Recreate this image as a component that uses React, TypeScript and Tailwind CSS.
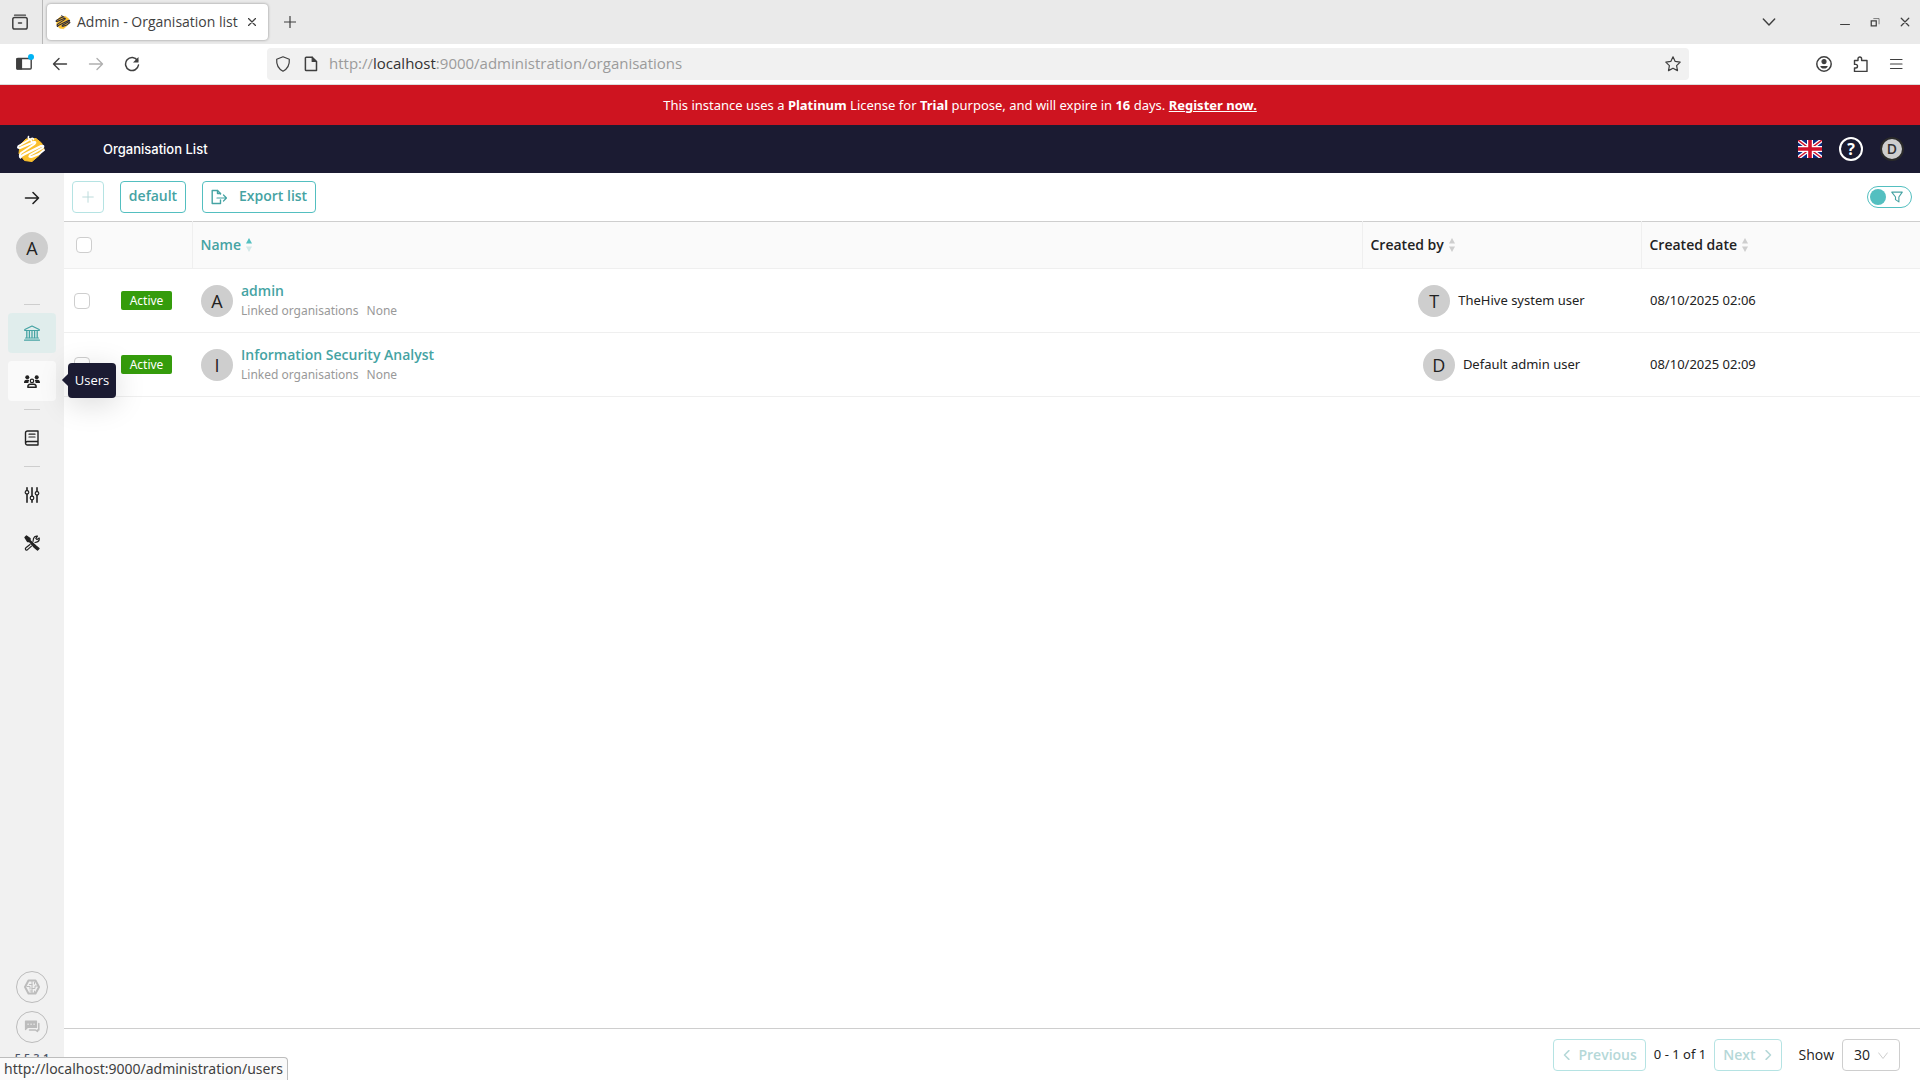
import type { ReactNode } from 'react'
import { clsx } from 'clsx'

type Organisation = {
  name: string
  initial: string
  createdBy: string
  createdByInitial: string
  createdAt: string
}

const organisations: Organisation[] = [
  { name: 'admin', initial: 'A', createdBy: 'TheHive system user', createdByInitial: 'T', createdAt: '08/10/2025 02:06' },
  { name: 'Information Security Analyst', initial: 'I', createdBy: 'Default admin user', createdByInitial: 'D', createdAt: '08/10/2025 02:09' },
]

function Icon({ size = 16, className, children }: { size?: number; className?: string; children: ReactNode }) {
  return (
    <svg
      width={size}
      height={size}
      viewBox="0 0 16 16"
      fill="none"
      stroke="currentColor"
      strokeWidth="1.2"
      strokeLinecap="round"
      strokeLinejoin="round"
      aria-hidden="true"
      className={clsx('shrink-0', className)}
    >
      {children}
    </svg>
  )
}

function HiveLogo({ size, stripe }: { size: number; stripe: string }) {
  return (
    <svg width={size} height={size} viewBox="0 0 30 28" fill="none" aria-hidden="true" className="shrink-0">
      <path d="M10 4 20 3.500 25.500 8 28 14 23 20.500 16 26.500 8.500 25.500 3 18.500 4 10Z" fill="#fbc02d" stroke="#fbc02d" strokeWidth="1" strokeLinejoin="round" />
      <g stroke={stripe} strokeWidth="2" strokeLinecap="round" strokeLinejoin="round">
        <path d="M13 5 2.500 11Q1 13.500 4 13L18 7Q20.500 6.500 18.500 9L5 18Q3 20.500 4.500 22.500" />
        <path d="M4.500 22.500Q5 21 8 19.500L25 11Q29 10 26.500 13L14 20Q12 22.500 15.500 22L23 19 28 15" />
        <path d="M14.500 4.500Q11.500 3.500 12.500 1.500M14.500 4.500 16 7M14.500 4.500Q17 2 17.500 4.500" strokeWidth="1.600" />
      </g>
    </svg>
  )
}

function UnionJack() {
  return (
    <svg width="24" height="18" viewBox="0 0 24 18" aria-hidden="true">
      <path d="M0 0h24v18H0z" fill="#0b2a80" />
      <path d="m0 0 24 18M24 0 0 18" stroke="#fff" strokeWidth="4" />
      <path d="m0 0 24 18M24 0 0 18" stroke="#d0112b" strokeWidth="1.400" />
      <path d="M12 0v18M0 9h24" stroke="#fff" strokeWidth="6" />
      <path d="M12 0v18M0 9h24" stroke="#d0112b" strokeWidth="3.600" />
    </svg>
  )
}

function Avatar({ letter }: { letter: string }) {
  return (
    <span className="flex size-8 shrink-0 items-center justify-center rounded-full bg-[#cecece] font-['Open_Sans'] text-lg leading-none text-[#222]">
      {letter}
    </span>
  )
}

function BrowserTabs() {
  return (
    <div className="flex h-11 items-center bg-[#eaeaea] pr-2 text-[#3f3f3f]">
      <div className="flex h-full w-[43px] items-center border-r border-[#b8b8b8] pl-3">
        <button type="button" aria-label="Recent browsing">
          <Icon>
            <path d="M2.500 1.200h11" />
            <rect x=".8" y="3.500" width="14.400" height="11.500" rx="1.800" strokeWidth="1.500" />
            <path d="M6.500 9h3" strokeWidth="1.500" />
          </Icon>
        </button>
      </div>
      <div className="ml-1 flex h-9 items-center rounded-sm bg-white pr-3 pl-2 shadow-[0_0_3px_rgba(0,0,0,0.4)]">
        <HiveLogo size={16} stripe="#2c2a3c" />
        <span className="ml-1.5 text-sm whitespace-nowrap">Admin - Organisation list</span>
        <button type="button" aria-label="Close tab" className="ml-2.5">
          <Icon size={8}><path d="m1 1 14 14M15 1 1 15" strokeWidth="2.600" /></Icon>
        </button>
      </div>
      <button type="button" aria-label="New tab" className="ml-4">
        <Icon size={12}><path d="M8 .5v15M.5 8h15" strokeWidth="1.600" /></Icon>
      </button>
      <div className="ml-auto flex items-center">
        <button type="button" aria-label="List all tabs" className="mr-16">
          <Icon size={14}><path d="m1.500 4.500 6.500 7 6.500-7" strokeWidth="1.600" /></Icon>
        </button>
        <button type="button" aria-label="Minimise" className="mr-5">
          <Icon size={10}><path d="M1 12h14" strokeWidth="1.600" strokeLinecap="square" /></Icon>
        </button>
        <button type="button" aria-label="Restore" className="mr-5">
          <Icon size={10}>
            <path d="M2 6h8v8H2z" strokeWidth="2" strokeLinejoin="miter" />
            <path d="M6 2.500h8.500V11" strokeWidth="1" />
          </Icon>
        </button>
        <button type="button" aria-label="Close window" className="mr-0.5">
          <Icon size={10}><path d="m2 2 12 12M14 2 2 14" strokeWidth="2" /></Icon>
        </button>
      </div>
    </div>
  )
}

function BrowserToolbar() {
  return (
    <div className="flex h-[41px] items-center border-b border-[#dcdcdc] bg-white pr-4 pl-4 text-[#3f3f3f]">
      <div className="flex w-[251px] shrink-0 items-center gap-5">
        <button type="button" aria-label="Show sidebar" className="relative">
          <Icon>
            <rect x=".8" y="2.500" width="14.400" height="10.500" rx="1" strokeWidth="1.400" />
            <path d="M1 2.500h4.500v10.500H1z" fill="currentColor" />
          </Icon>
          <span className="absolute -top-0.5 -right-0.5 size-1.5 rounded-full bg-[#00b3f4]" />
        </button>
        <button type="button" aria-label="Back">
          <Icon><path d="M14.500 8h-13M7 2.500 1.500 8 7 13.500" strokeWidth="1.400" /></Icon>
        </button>
        <button type="button" aria-label="Forward" disabled className="text-[#b0b0b0]">
          <Icon><path d="M1.500 8h13M9 2.500 14.500 8 9 13.500" strokeWidth="1.400" /></Icon>
        </button>
        <button type="button" aria-label="Reload">
          <Icon>
            <path d="M13.500 4.500A6.500 6.500 0 1 0 14.500 9" strokeWidth="1.500" />
            <path d="M14.500 1v5.500H9z" fill="currentColor" stroke="none" />
          </Icon>
        </button>
      </div>
      <div className="flex h-8 grow items-center rounded-sm bg-[#f1f1f1] px-2">
        <Icon><path d="M8 .8 14.300 3.200c.4 5-1.300 9.300-6.300 12C3 12.500 1.300 8.200 1.700 3.200Z" /></Icon>
        <Icon className="mr-2.5 ml-3">
          <path d="M3.200 1.200h6l4.300 4.300v9H3.200a.8.800 0 0 1-.8-.8V2a.8.800 0 0 1 .8-.8Z" strokeWidth="1.500" />
          <path d="M9.200 1.200v4.300h4.300" fill="currentColor" />
        </Icon>
        <span className="grow pb-px text-[15px] text-[#9b9b9b]">
          http://<span className="text-[#333]">localhost</span>:9000/administration/organisations
        </span>
        <button type="button" aria-label="Bookmark this page">
          <Icon><path d="m8 .8 2.200 4.600 5 .7-3.600 3.500.9 5L8 12.200l-4.500 2.400.9-5L.8 6.100l5-.7Z" /></Icon>
        </button>
      </div>
      <div className="flex w-[215px] shrink-0 items-center justify-end gap-5">
        <button type="button" aria-label="Account">
          <Icon>
            <circle cx="8" cy="8" r="7.200" strokeWidth="1.500" />
            <circle cx="8" cy="5.600" r="2" fill="currentColor" />
            <path d="M4.300 10h7.400c0 1.500-1.500 2.600-3.700 2.600S4.300 11.500 4.300 10Z" fill="currentColor" stroke="none" />
          </Icon>
        </button>
        <button type="button" aria-label="Extensions">
          <Icon><path d="M2.500 4.500H6V2.800a1.800 1.800 0 0 1 3.600 0v1.700H15v11H2.500V12h1.200a1.800 1.800 0 0 0 0-3.600H2.500Z" strokeWidth="1.400" /></Icon>
        </button>
        <button type="button" aria-label="Menu">
          <Icon><path d="M2.500 3.500h11.500M2.500 8h11.500M2.500 12.500h11.500" /></Icon>
        </button>
      </div>
    </div>
  )
}

function LicenseBanner() {
  return (
    <div className="flex h-10 items-center justify-center bg-[#ce1420] pt-0.5 font-['Noto_Sans'] text-[13px] text-white">
      <p>
        This instance uses a <b>Platinum</b> License for <b>Trial</b> purpose, and will expire in <b>16</b> days.{' '}
        <a href="#register" className="font-bold underline">Register now.</a>
      </p>
    </div>
  )
}

function TopBar() {
  return (
    <header className="flex h-12 items-center bg-[#1b1b32] px-4 text-white">
      <HiveLogo size={30} stripe="#fff" />
      <h1 className="ml-[57px] pt-0.5 font-['Inter'] text-[13px] font-medium">Organisation List</h1>
      <div className="ml-auto flex items-center">
        <button type="button" aria-label="Language: English"><UnionJack /></button>
        <button type="button" aria-label="Help" className="mx-[17px] flex size-6 items-center justify-center rounded-full border-2 border-white text-base leading-none font-bold">
          ?
        </button>
        <button type="button" className="flex size-6 items-center justify-center rounded-full border-2 border-[#2a2a2a] bg-[#cecece] text-sm leading-none font-semibold text-[#333]">
          D
        </button>
      </div>
    </header>
  )
}

function Divider() {
  return <div className="h-px w-4 bg-[#cecece]" />
}

function SideLink({ label, className, children }: { label: string; className?: string; children: ReactNode }) {
  return (
    <a href={`#${label.toLowerCase()}`} aria-label={label} className={clsx('flex h-10 w-12 items-center justify-center rounded-sm', className)}>
      {children}
    </a>
  )
}

function Sidebar() {
  return (
    <nav className="flex w-16 shrink-0 flex-col items-center bg-[#f1f1f1] pb-4 text-[#222]">
      <button type="button" aria-label="Expand menu" className="mt-[17px]">
        <Icon><path d="M1.500 8h13M9 2.500 14.500 8 9 13.500" strokeWidth="1.600" /></Icon>
      </button>
      <div className="mt-[26px] mb-10"><Avatar letter="A" /></div>
      <Divider />
      <SideLink label="Organisations" className="mt-2 bg-[#e0edec] text-[#45a3a3]">
        <Icon>
          <path d="M8 1 .8 4.500v1h14.400v-1Z" />
          <path d="M2.800 6.500v6M5.400 6.500v6M8 6.500v6M10.600 6.500v6M13.200 6.500v6" strokeWidth="1.300" />
          <path d="M1.500 13h13M.5 15.200h15" strokeWidth="1.200" />
        </Icon>
      </SideLink>
      <div className="relative my-2">
        <SideLink label="Users" className="bg-[#fafafa]">
          <Icon>
            <g fill="currentColor" stroke="none">
              <circle cx="3.300" cy="4.300" r="2" />
              <circle cx="12.700" cy="4.300" r="2" />
              <path d="M0 10c0-2 1-3.200 2.500-3.200h1.800c.6 0 .8.300.8.800-.6.700-.8 1.500-.7 2.400ZM16 10c0-2-1-3.200-2.500-3.200h-1.800c-.6 0-.8.300-.8.800.6.700.8 1.500.7 2.400Z" />
            </g>
            <circle cx="8" cy="7.900" r="1.700" />
            <path d="M3.800 14.300c0-2.200 1-3 2.400-3h3.600c1.400 0 2.400.8 2.400 3Z" strokeWidth="1.400" />
          </Icon>
        </SideLink>
        <div role="tooltip" className="absolute top-0.5 left-15 z-10 flex h-[35px] w-12 items-center justify-center rounded-sm bg-[#1b1b32] text-[13px] text-white shadow-[0_6px_30px_rgba(0,0,0,0.15)]">
          <span className="absolute top-3 -left-1 size-2.5 rotate-45 bg-[#1b1b32]" />
          <span className="relative">Users</span>
        </div>
      </div>
      <Divider />
      <SideLink label="Dictionary" className="my-2">
        <Icon>
          <path d="M3.500 1h10.500v14H3.500a2 2 0 0 1-2-2V3a2 2 0 0 1 2-2ZM1.500 13a2 2 0 0 1 2-1.500H14" strokeWidth="1.400" />
          <path d="M5 4.200h6M5 7h6" strokeWidth="1.200" />
        </Icon>
      </SideLink>
      <Divider />
      <SideLink label="Settings" className="mt-2">
        <Icon>
          <path d="M3 .8v3M3 7v8.200M8 .8v8M8 13v2.200M13 .8v4M13 8v7.200" strokeWidth="1.600" />
          <circle cx="3" cy="5.300" r="1.800" />
          <circle cx="8" cy="11" r="1.800" />
          <circle cx="13" cy="6.300" r="1.800" />
        </Icon>
      </SideLink>
      <SideLink label="Tools" className="mt-2">
        <Icon>
          <path d="M1 2.500 2.500 1 6 3.500v2l6 5.500 3 2.500-1.500 1.500-3-2.500L5.500 6.500h-2Z" fill="currentColor" strokeWidth="1.400" />
          <path d="m9 6.500.5-3C10.200 1.500 12 .8 13.500 1.200L11.800 3.300l1.200 1.200 2.200-1.500c.3 2-.7 3.800-2.700 4.100L11 7.500M6 9.500l-3.800 3c-1.500 1-.7 3 .8 2.600l4.500-4" />
        </Icon>
      </SideLink>
      <div className="mt-auto flex flex-col items-center gap-2 text-[#bcbcbc]">
        <button type="button" aria-label="Cortex" className="flex size-8 items-center justify-center rounded-full border border-[#bcbcbc]">
          <Icon>
            <path d="M4.500 1.500h7L15 8l-3.500 6.500h-7L1 8Z" strokeWidth="2" />
            <path d="M8 2.500v11M8 5.500H5.500M3 7.500h3v2.500M6 12h2M8 9.500h3V7h2.500M10.500 3v2M10.500 12v1.500" strokeWidth="1" />
          </Icon>
        </button>
        <button type="button" aria-label="Feedback" className="flex size-8 items-center justify-center rounded-full border border-[#bcbcbc]">
          <Icon>
            <path d="M1.500 2h11v6.500h-9L1.500 10.500Z" fill="currentColor" />
            <path d="M14.800 4.500v6.500h-1.300v1.500L11.500 11H5.500" strokeWidth="1.500" />
            <path d="M4 5.200h.2M7 5.200h.2M10 5.200h.2" stroke="#f1f1f1" strokeWidth="1.300" />
          </Icon>
        </button>
        <span className="text-[11px] leading-[13px] font-semibold text-[#4b5568]">5.5.3-1</span>
      </div>
    </nav>
  )
}

function ActionBar() {
  return (
    <div className="flex h-12 items-center gap-4 px-2 font-semibold text-[#45a3a3]">
      <button type="button" aria-label="Add organisation" disabled className="flex size-8 items-center justify-center rounded-sm border border-[#b5e3e3] text-[#b5d8d8]">
        <Icon size={12}><path d="M8 1v14M1 8h14" /></Icon>
      </button>
      <button type="button" className="h-8 w-[66px] rounded-sm border border-[#53bfc0] pb-0.5 text-sm">default</button>
      <button type="button" className="flex h-8 items-center rounded-sm border border-[#53bfc0] px-2 text-sm">
        <Icon>
          <path d="M9.500 5V4.500L6.500 1.500H1.200v13h8.300V11" strokeWidth="1.400" />
          <path d="M6.500 1.500v3h3" strokeWidth="1.400" />
          <path d="M6 9h9M12.500 6l3 3-3 3" />
        </Icon>
        <span className="ml-3 pb-0.5">Export list</span>
      </button>
      <button type="button" aria-label="Show filters" className="ml-auto flex h-[22px] w-[45px] items-center justify-between rounded-full border border-[#53bfc0] pr-2 pl-0.5">
        <span className="size-4 rounded-full bg-[#53bfc0]" />
        <Icon size={12}><path d="M1 1.500h14L10.500 8v6.500L6 11.500V8Z" strokeWidth="1.500" /></Icon>
      </button>
    </div>
  )
}

function SortArrows({ sorted }: { sorted?: boolean }) {
  return (
    <svg width="6" height="14" viewBox="0 0 6 14" aria-hidden="true">
      <path d="M3 0 6 5.500H0Z" fill={sorted ? '#53bfc0' : '#cecece'} />
      <path d="M3 14 0 8.500h6Z" fill={sorted ? '#d3e8e8' : '#cecece'} />
    </svg>
  )
}

function HeaderCell({ label, sorted }: { label: string; sorted?: boolean }) {
  return (
    <th scope="col" aria-sort={sorted ? 'ascending' : undefined} className="border-l border-[#efefef] px-2 text-left">
      <button type="button" className={clsx('flex items-center gap-[5px] text-sm font-semibold', sorted && 'text-[#45a3a3]')}>
        {label}
        <SortArrows sorted={sorted} />
      </button>
    </th>
  )
}

function Checkbox({ label }: { label: string }) {
  return <input type="checkbox" aria-label={label} className="block size-4 appearance-none rounded-sm border border-[#cecece] bg-white" />
}

function OrganisationTable() {
  return (
    <table className="w-full table-fixed border-collapse text-left font-['Noto_Sans'] text-[13px] text-[#222]">
      <colgroup>
        <col className="w-12" />
        <col className="w-20" />
        <col />
        <col className="w-[279px]" />
        <col className="w-[279px]" />
      </colgroup>
      <thead className="font-['Open_Sans']">
        <tr className="h-[47px] border-t border-b border-t-[#cecece] border-b-[#efefef] bg-[#fafafa]">
          <th scope="col" className="pl-3"><Checkbox label="Select all" /></th>
          <td />
          <HeaderCell label="Name" sorted />
          <HeaderCell label="Created by" />
          <HeaderCell label="Created date" />
        </tr>
      </thead>
      <tbody>
        {organisations.map((org) => (
          <tr key={org.name} className="h-16 border-b border-[#efefef]">
            <td className="pl-2.5"><Checkbox label={`Select ${org.name}`} /></td>
            <td className="pl-[9px]">
              <span className="inline-block w-[51px] rounded-xs bg-[#359c0c] text-center text-xs leading-[19px] text-white">Active</span>
            </td>
            <td className="pl-[9px]">
              <div className="flex items-center gap-2">
                <Avatar letter={org.initial} />
                <div>
                  <a href={`#${org.initial}`} className="block font-['Open_Sans'] text-sm leading-5 font-semibold text-[#45a3a3]">{org.name}</a>
                  <p className="flex gap-2 text-xs leading-5 text-[#999]">
                    <span>Linked organisations</span>
                    <span>None</span>
                  </p>
                </div>
              </div>
            </td>
            <td>
              <div className="flex items-center justify-center gap-2">
                <Avatar letter={org.createdByInitial} />
                {org.createdBy}
              </div>
            </td>
            <td className="pl-[9px]">{org.createdAt}</td>
          </tr>
        ))}
      </tbody>
    </table>
  )
}

function Pagination() {
  return (
    <footer className="mt-auto flex h-[52px] items-center justify-end border-t border-[#cecece] pr-5 text-sm text-[#222]">
      <button type="button" disabled className="flex h-8 items-center rounded-sm border border-[#b5e3e3] px-2 font-semibold text-[#b5d8d8]">
        <Icon size={10} className="mr-1.5"><path d="M11 1 4 8l7 7" strokeWidth="2.400" /></Icon>
        Previous
      </button>
      <span className="mx-2 font-['Noto_Sans'] text-[13px]">0 - 1 of 1</span>
      <button type="button" disabled className="flex h-8 items-center rounded-sm border border-[#b5e3e3] px-2 font-semibold text-[#b5d8d8]">
        Next
        <Icon size={10} className="ml-2"><path d="m5 1 7 7-7 7" strokeWidth="2.400" /></Icon>
      </button>
      <label htmlFor="page-size" className="mr-2 ml-4">Show</label>
      <div className="relative">
        <select id="page-size" defaultValue="30" className="h-8 w-[58px] appearance-none rounded-sm border border-[#cecece] bg-white pl-[11px]">
          <option>30</option>
          <option>60</option>
          <option>100</option>
        </select>
        <Icon size={10} className="pointer-events-none absolute top-3 right-3 text-[#cecece]"><path d="m1 3 7 9 7-9" strokeWidth="1.600" /></Icon>
      </div>
    </footer>
  )
}

function App() {
  return (
    <div className="flex min-h-screen flex-col bg-white font-['Open_Sans','Noto_Sans',sans-serif]">
      <BrowserTabs />
      <BrowserToolbar />
      <LicenseBanner />
      <TopBar />
      <div className="flex grow">
        <Sidebar />
        <main className="flex grow flex-col">
          <ActionBar />
          <OrganisationTable />
          <Pagination />
        </main>
      </div>
      <div className="fixed bottom-0 left-0 z-20 rounded-tr-sm border-t border-r border-[#bdbdbd] bg-[#fafafa] px-1 py-px font-['Noto_Sans'] text-sm text-[#3f3f3f]">
        http://localhost:9000/administration/users
      </div>
    </div>
  )
}

export default App
